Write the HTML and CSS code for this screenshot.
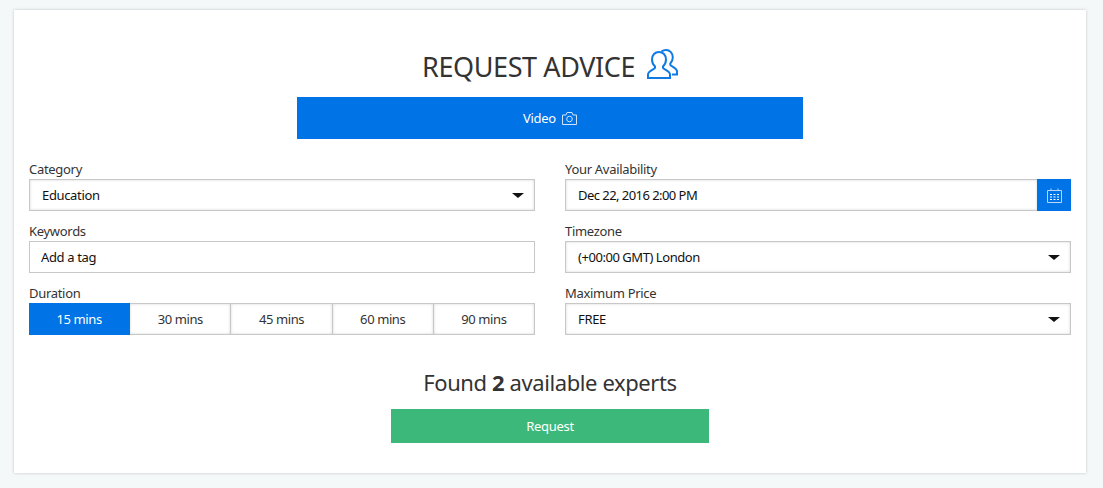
FILE: index.html
```html
<!DOCTYPE html>
<html lang="en">
<head>
    <meta charset="UTF-8">
    <title>Request Advice</title>
    <link rel="stylesheet" href="styles.css">
</head>
<body>
    <div class="card">
        <h1 class="title">REQUEST ADVICE
            <svg class="title-icon" width="31" height="31" viewBox="0 0 31 31" fill="none" stroke="#0f7ae5" stroke-width="2">
                <path d="M12 3C8 3 5 6 5 10.5C5 13.5 6.5 16 8 17.5V19C8 20 1 22 1 25.5V29H23V25.5C23 22 16 20 16 19V17.5C17.5 16 19 13.5 19 10.5C19 6 16 3 12 3Z"/>
                <path d="M14.5 2.6C16 1.4 17.5 1 19 1C23 1 25.8 4.2 25.8 8.2C25.8 11 24.8 13 23.3 14.5V16C23.3 17 30 19 30 22.5V25.5H25"/>
            </svg>
        </h1>
        <div class="mode-btn">Video
            <svg width="15" height="13" viewBox="0 0 15 13" fill="none" stroke="#cfe4fb" stroke-width="1">
                <path d="M0.5 3H4L5 0.5H10L11 3H14.5V12.5H0.5Z"/>
                <circle cx="7.5" cy="7" r="2.8"/>
            </svg>
        </div>

        <div class="fields">
            <div class="field">
                <label class="field-label">Category</label>
                <div class="select">Education<span class="caret"></span></div>
            </div>
            <div class="field">
                <label class="field-label">Your Availability</label>
                <div class="date-row">
                    <div class="select date-input">Dec 22, 2016 2:00 PM</div>
                    <div class="date-btn">
                        <svg width="15" height="15" viewBox="0 0 15 15" fill="none">
                            <path d="M0.5 2.5H14.5V14.5H0.5Z" stroke="#b8d8f8"/>
                            <path d="M4 0.5V3M11 0.5V3" stroke="#b8d8f8"/>
                            <path d="M3 6.5H5M6.5 6.5H8.5M10 6.5H12M3 9H5M6.5 9H8.5M10 9H12M3 11.5H5M6.5 11.5H8.5M10 11.5H12" stroke="#fff" stroke-width="1.2"/>
                        </svg>
                    </div>
                </div>
            </div>
            <div class="field">
                <label class="field-label">Keywords</label>
                <div class="select tags">Add a tag</div>
            </div>
            <div class="field">
                <label class="field-label">Timezone</label>
                <div class="select tz">(+00:00 GMT) London<span class="caret"></span></div>
            </div>
            <div class="field">
                <label class="field-label">Duration</label>
                <div class="durations">
                    <div class="duration active">15 mins</div>
                    <div class="duration">30 mins</div>
                    <div class="duration">45 mins</div>
                    <div class="duration">60 mins</div>
                    <div class="duration">90 mins</div>
                </div>
            </div>
            <div class="field">
                <label class="field-label">Maximum Price</label>
                <div class="select">FREE<span class="caret"></span></div>
            </div>
        </div>

        <p class="found">Found <b>2</b> available experts</p>
        <div class="request-btn">Request</div>
    </div>
</body>
</html>
```

FILE: styles.css
```css
body {
    margin: 0;
    height: 488px;
    overflow: hidden;
    padding: 10px 17px 0 14px;
    box-sizing: border-box;
    background-color: #f5f8f9;
    font-family: "Noto Sans", sans-serif;
    color: #333;
}
.card {
    height: 463px;
    box-sizing: border-box;
    padding: 38px 15px 0;
    background-color: #fff;
    box-shadow: 0 0 3px rgba(0, 0, 0, 0.2);
    display: flex;
    flex-direction: column;
    align-items: center;
}
.title {
    margin: 0;
    height: 49px;
    display: flex;
    align-items: flex-start;
    gap: 12px;
    font-size: 27px;
    font-weight: 400;
    line-height: 37px;
    letter-spacing: -0.4px;
}
.title-icon {
    margin-top: 1px;
}
.mode-btn {
    width: 506px;
    height: 42px;
    display: flex;
    align-items: center;
    justify-content: center;
    gap: 6px;
    background-color: #0073e6;
    color: #fff;
    font-size: 13px;
    letter-spacing: -0.3px;
}
.fields {
    align-self: stretch;
    margin-top: 22px;
    display: grid;
    grid-template-columns: 506px 506px;
    column-gap: 30px;
    row-gap: 12px;
}
.field-label {
    display: block;
    height: 18px;
    font-size: 13px;
    line-height: 16px;
    letter-spacing: -0.3px;
}
.select {
    position: relative;
    height: 32px;
    box-sizing: border-box;
    padding-left: 12px;
    border: 1px solid #c8c8c8;
    box-shadow: inset 0 0 3px rgba(0, 0, 0, 0.16);
    font-size: 13px;
    line-height: 30px;
    letter-spacing: -0.35px;
    color: #111;
}
.tags {
    padding-left: 11px;
    box-shadow: none;
}
.tz {
    letter-spacing: -0.45px;
}
.caret {
    position: absolute;
    right: 10px;
    top: 13px;
    border-top: 5px solid #111;
    border-left: 6px solid transparent;
    border-right: 6px solid transparent;
}
.date-row {
    display: flex;
}
.date-input {
    flex: 1;
    border-right: none;
    letter-spacing: -0.55px;
}
.date-btn {
    width: 34px;
    height: 32px;
    background-color: #0073e6;
    display: flex;
    align-items: center;
    justify-content: center;
}
.durations {
    display: flex;
    height: 32px;
}
.duration {
    flex: 1;
    box-sizing: border-box;
    border: 1px solid #c8c8c8;
    border-left: none;
    box-shadow: inset 0 0 3px rgba(0, 0, 0, 0.16);
    text-align: center;
    font-size: 13px;
    line-height: 30px;
    letter-spacing: -0.4px;
}
.duration.active {
    background-color: #0073e6;
    border-color: #0073e6;
    color: #fff;
    box-shadow: none;
}
.found {
    margin: 32px 0 0;
    height: 42px;
    font-size: 22px;
    line-height: 30px;
    letter-spacing: -0.4px;
}
.request-btn {
    width: 318px;
    height: 34px;
    background-color: #3cb97a;
    color: #fff;
    font-size: 13px;
    line-height: 34px;
    letter-spacing: -0.3px;
    text-align: center;
}
```
